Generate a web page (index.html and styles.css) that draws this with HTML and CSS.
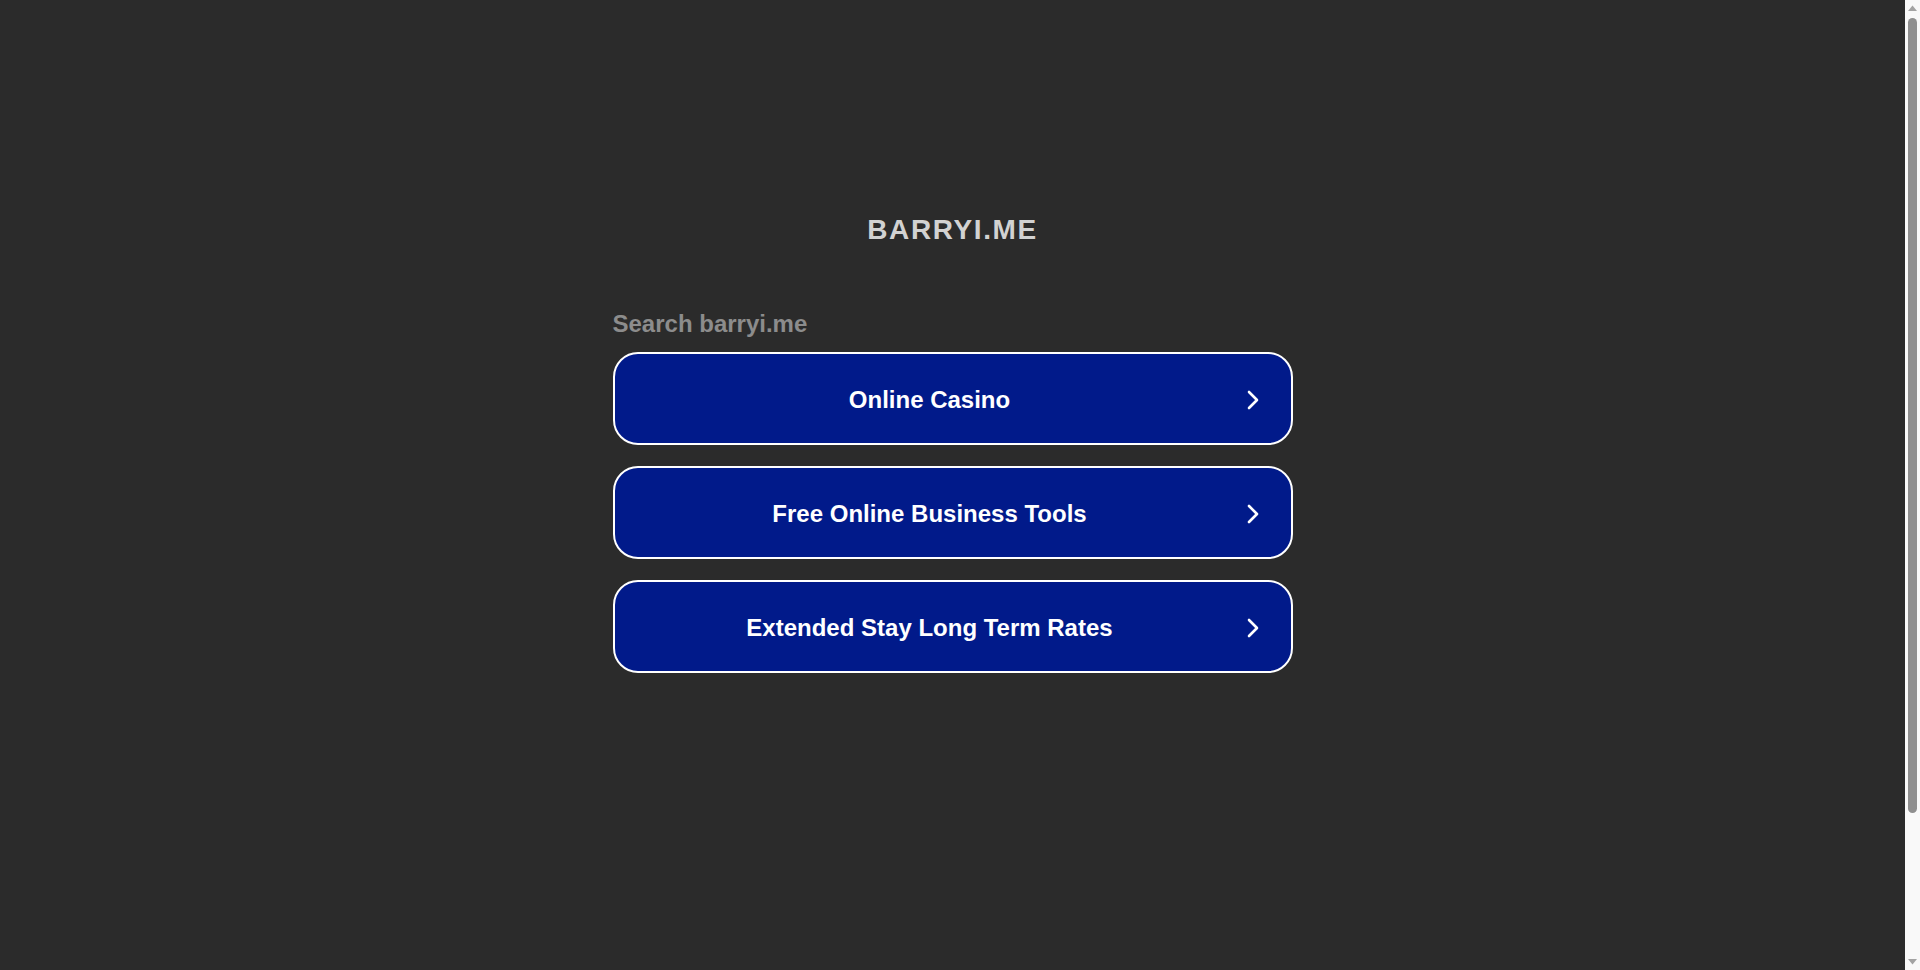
FILE: index.html
```html
<!DOCTYPE html>
<html lang="en">
<head>
<meta charset="utf-8">
<title>barryi.me</title>
<link rel="stylesheet" href="styles.css">
</head>
<body>
<main class="page">
  <h1 class="domain">BARRYI.ME</h1>
  <section class="search">
    <h2 class="search-label">Search barryi.me</h2>
    <ul class="links">
      <li><a class="link" href="#"><span class="link-text">Online Casino</span><svg class="chev" viewBox="0 0 14 22" width="14" height="22"><path d="M3 3 L11 11 L3 19" fill="none" stroke="#fff" stroke-width="2.6" stroke-linecap="round" stroke-linejoin="round"/></svg></a></li>
      <li><a class="link" href="#"><span class="link-text">Free Online Business Tools</span><svg class="chev" viewBox="0 0 14 22" width="14" height="22"><path d="M3 3 L11 11 L3 19" fill="none" stroke="#fff" stroke-width="2.6" stroke-linecap="round" stroke-linejoin="round"/></svg></a></li>
      <li><a class="link" href="#"><span class="link-text">Extended Stay Long Term Rates</span><svg class="chev" viewBox="0 0 14 22" width="14" height="22"><path d="M3 3 L11 11 L3 19" fill="none" stroke="#fff" stroke-width="2.6" stroke-linecap="round" stroke-linejoin="round"/></svg></a></li>
    </ul>
  </section>
</main>
<div class="scrollbar" aria-hidden="true">
  <svg class="sb-arrow" viewBox="0 0 15 15" width="15" height="15"><path d="M3 11 L7.5 5.5 L12 11 Z" fill="#a3a3a3"/></svg>
  <div class="sb-track"><div class="sb-thumb"></div></div>
  <svg class="sb-arrow" viewBox="0 0 15 15" width="15" height="15"><path d="M3 4 L7.5 9.5 L12 4 Z" fill="#a3a3a3"/></svg>
</div>
</body>
</html>
```
FILE: styles.css
```css
html, body {
  margin: 0;
  padding: 0;
  background: #2b2b2b;
}
body {
  font-family: "Liberation Sans", Arial, sans-serif;
  padding-right: 15px;
}
.page {
  min-height: 1147px;
  box-sizing: border-box;
  padding-top: 213px;
  display: flex;
  flex-direction: column;
  align-items: center;
}
.domain {
  margin: 0;
  font-size: 28px;
  line-height: 34px;
  font-weight: bold;
  letter-spacing: 1.6px;
  color: #d2d2d2;
}
.search {
  width: 680px;
  margin-top: 63px;
}
.search-label {
  margin: 0 0 14px;
  font-size: 24px;
  line-height: 28px;
  font-weight: bold;
  color: #8c8c8c;
}
.links {
  list-style: none;
  margin: 0;
  padding: 0;
  display: flex;
  flex-direction: column;
  gap: 21px;
}
.link {
  display: flex;
  align-items: center;
  box-sizing: border-box;
  height: 93px;
  padding: 2px 31px 0 32px;
  border: 2px solid #ffffff;
  border-radius: 25px;
  background: #011a8a;
  color: #ffffff;
  text-decoration: none;
}
.link-text {
  flex: 1;
  text-align: center;
  font-size: 24px;
  font-weight: bold;
}
.chev {
  margin-left: 33px;
  flex: none;
}
.scrollbar {
  position: fixed;
  top: 0;
  right: 0;
  width: 15px;
  height: 100vh;
  background: #f9f9f9;
  display: flex;
  flex-direction: column;
}
.sb-arrow {
  display: block;
  flex: none;
}
.sb-track {
  flex: 1;
  padding: 3px 3px 0;
}
.sb-thumb {
  height: 795px;
  background: #8f8f8f;
  border-radius: 5px;
}
```
